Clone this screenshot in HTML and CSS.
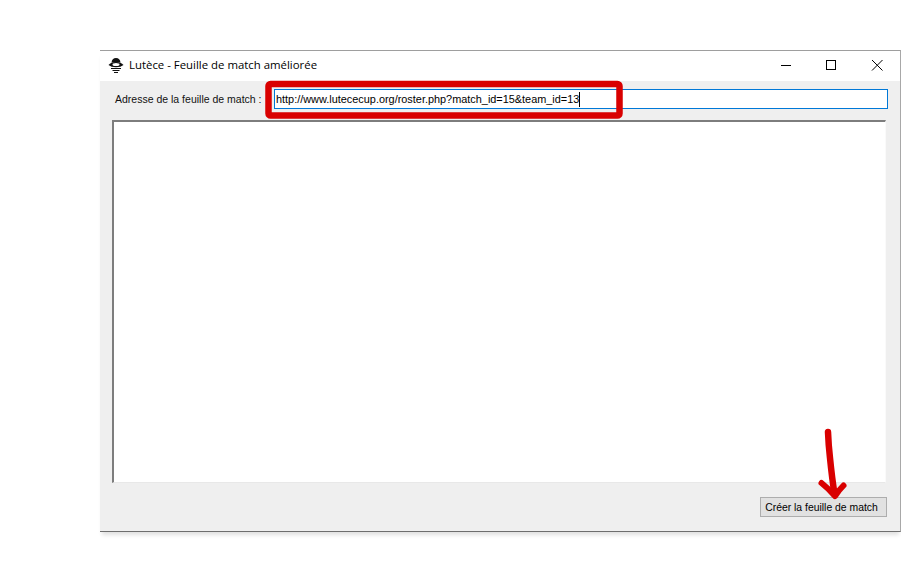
FILE: index.html
```html
<!DOCTYPE html>
<html lang="fr">
<head>
<meta charset="utf-8">
<title>Lutèce - Feuille de match améliorée</title>
<link rel="stylesheet" href="styles.css">
</head>
<body>
<div class="window">
  <div class="titlebar">
    <div class="title-left">
      <svg class="app-icon" width="16" height="16" viewBox="0 0 16 16">
        <path d="M3.500 5.500 Q4 1 8 1 Q12 1 12.500 5.500 Z" fill="#111"/>
        <path d="M0.500 8 Q3 5 8 5 Q13 5 15.500 8 Q13 10.300 8 10.300 Q3 10.300 0.500 8 Z" fill="#111"/>
        <ellipse cx="8" cy="7.600" rx="3.500" ry="1.500" fill="#fff"/>
        <rect x="3" y="11" width="10" height="1" fill="#111"/>
        <rect x="4.500" y="13" width="7" height="1" fill="#111"/>
        <rect x="6" y="15" width="4" height="1" fill="#111"/>
      </svg>
      <span class="title-text">Lutèce - Feuille de match améliorée</span>
    </div>
    <div class="controls">
      <svg class="control" width="46" height="31" viewBox="0 0 46 31"><path d="M19 14.500 H29" stroke="#000" stroke-width="1"/></svg>
      <svg class="control" width="46" height="31" viewBox="0 0 46 31"><rect x="18.500" y="9.500" width="9" height="9" fill="none" stroke="#000" stroke-width="1"/></svg>
      <svg class="control" width="46" height="31" viewBox="0 0 46 31"><path d="M18 9 L28.500 19.500 M28.500 9 L18 19.500" stroke="#000" stroke-width="1" fill="none"/></svg>
    </div>
  </div>
  <div class="body">
    <div class="address-row">
      <span class="label">Adresse de la feuille de match :</span>
      <div class="input"><span class="input-text">http://www.lutececup.org/roster.php?match_id=15&amp;team_id=13</span><span class="caret"></span></div>
    </div>
    <div class="textarea"></div>
    <div class="footer">
      <div class="button">Créer la feuille de match</div>
    </div>
  </div>
</div>
<svg class="annotations" width="901" height="586" viewBox="0 0 901 586">
  <rect x="268.500" y="84" width="351" height="31.500" rx="2" fill="none" stroke="#d90000" stroke-width="6.500"/>
  <path d="M828 432 Q828.500 445 830 458 Q832 478 834.500 494" fill="none" stroke="#d90000" stroke-width="6.500" stroke-linecap="round"/>
  <path d="M821.500 483 Q829 489 835 496 Q839 490 843.500 485.500" fill="none" stroke="#d90000" stroke-width="6" stroke-linecap="round" stroke-linejoin="round"/>
</svg>
</body>
</html>
```
FILE: styles.css
```css
html, body {
  margin: 0;
  padding: 0;
  background: #fff;
}
body {
  width: 901px;
  height: 586px;
  overflow: hidden;
  position: relative;
  padding-top: 50px;
  box-sizing: border-box;
}
.window {
  margin-left: 100px;
  width: 801px;
  height: 482px;
  box-sizing: border-box;
  border-top: 1px solid #9e9e9e;
  border-right: 1px solid #a8a8a8;
  border-bottom: 1px solid #6e6e6e;
  box-shadow: 0 5px 4px -2px rgba(0, 0, 0, 0.12);
  display: flex;
  flex-direction: column;
  background: #f0f0f0;
}
.titlebar {
  height: 30px;
  background: #fff;
  display: flex;
  justify-content: space-between;
  align-items: flex-start;
  flex: none;
}
.title-left {
  display: flex;
  align-items: center;
  padding-left: 8px;
  padding-top: 6px;
  gap: 5px;
}
.app-icon {
  display: block;
}
.title-text {
  font-family: "Open Sans", sans-serif;
  font-size: 11.4px;
  line-height: 16px;
  color: #000;
  white-space: nowrap;
}
.controls {
  display: flex;
}
.control {
  display: block;
}
.body {
  flex: 1;
  display: flex;
  flex-direction: column;
  background: #efefef;
  padding: 8px 13px 14px 12px;
  min-height: 0;
}
.address-row {
  display: flex;
  align-items: center;
  height: 20px;
  padding-left: 3px;
}
.label {
  font-family: "Liberation Sans", sans-serif;
  font-size: 10.5px;
  color: #111;
  width: 159px;
  flex: none;
  white-space: nowrap;
}
.input {
  flex: 1;
  height: 20px;
  box-sizing: border-box;
  border: 1px solid #0078d7;
  background: #fff;
  display: flex;
  align-items: center;
  padding-left: 1px;
  margin-right: -1px;
}
.input-text {
  font-family: "Liberation Sans", sans-serif;
  font-size: 10.9px;
  color: #000;
  white-space: nowrap;
}
.caret {
  width: 1px;
  height: 15px;
  background: #000;
}
.textarea {
  margin-top: 11px;
  margin-right: 1px;
  height: 363px;
  flex: none;
  box-sizing: border-box;
  background: #fff;
  border-top: 2px solid #7d7d7d;
  border-left: 2px solid #7d7d7d;
  border-right: 1px solid #fafafa;
  border-bottom: 1px solid #e8e8e8;
}
.footer {
  display: flex;
  justify-content: flex-end;
  margin-top: 14px;
}
.button {
  width: 127px;
  height: 20px;
  box-sizing: border-box;
  padding-right: 4px;
  border: 1px solid #adadad;
  background: #e1e1e1;
  font-family: "Liberation Sans", sans-serif;
  font-size: 10.4px;
  color: #000;
  display: flex;
  align-items: center;
  justify-content: center;
  white-space: nowrap;
}
.annotations {
  position: absolute;
  left: 0;
  top: 0;
  pointer-events: none;
}
```
